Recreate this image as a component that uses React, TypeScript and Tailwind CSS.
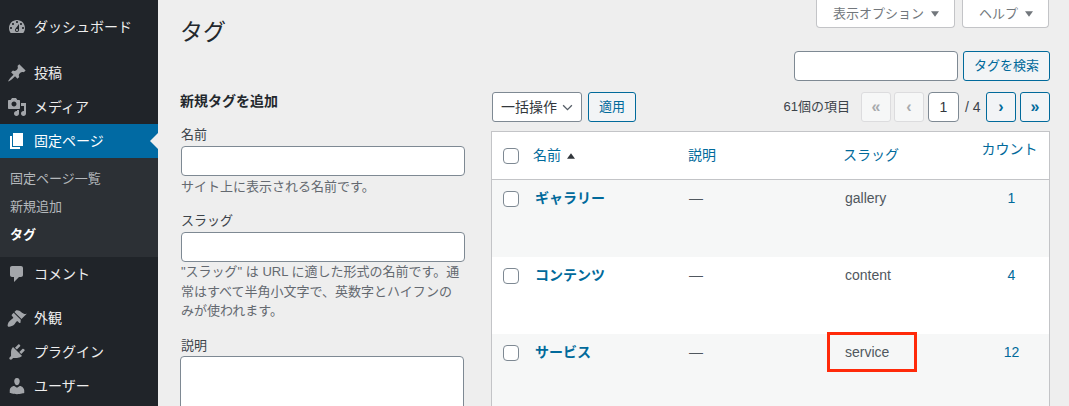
const icons = {
  dashboard: "M3.76 16h12.48c1.1-1.37 1.76-3.11 1.76-5 0-4.42-3.58-8-8-8s-8 3.58-8 8c0 1.89.66 3.63 1.76 5zM10 4c.55 0 1 .45 1 1s-.45 1-1 1-1-.45-1-1 .45-1 1-1zM6 6c.55 0 1 .45 1 1s-.45 1-1 1-1-.45-1-1 .45-1 1-1zm8 0c.55 0 1 .45 1 1s-.45 1-1 1-1-.45-1-1 .45-1 1-1zm-5.37 5.55L12 7v6c0 1.1-.9 2-2 2s-2-.9-2-2c0-.57.24-1.08.63-1.45zM4 10c.55 0 1 .45 1 1s-.45 1-1 1-1-.45-1-1 .45-1 1-1zm12 0c.55 0 1 .45 1 1s-.45 1-1 1-1-.45-1-1 .45-1 1-1zm-5 3c0-.55-.45-1-1-1s-1 .45-1 1 .45 1 1 1 1-.45 1-1z",
  pin: "M10.44 3.02l1.82-1.82 6.36 6.35-1.83 1.82c-1.05-.68-2.48-.57-3.41.36l-.75.75c-.92.93-1.04 2.35-.35 3.41l-1.83 1.82-2.41-2.41-2.8 2.79c-.42.42-3.38 2.71-3.8 2.29s1.86-3.39 2.28-3.81l2.79-2.79L4.1 9.36l1.83-1.82c1.05.69 2.48.57 3.4-.36l.75-.75c.93-.92 1.05-2.35.36-3.41z",
  media: "M13 11V4c0-.55-.45-1-1-1h-1.67L9 1H5L3.67 3H2c-.55 0-1 .45-1 1v7c0 .55.45 1 1 1h10c.55 0 1-.45 1-1zM7 4.5c1.38 0 2.5 1.12 2.5 2.5S8.38 9.5 7 9.5 4.5 8.38 4.5 7 5.62 4.5 7 4.5zM14 6h5v10.5c0 1.38-1.12 2.5-2.5 2.5S14 17.88 14 16.5s1.12-2.5 2.5-2.5c.17 0 .34.02.5.05V9h-3V6zm-4 8.05V13h2v3.5c0 1.38-1.12 2.5-2.5 2.5S7 17.88 7 16.5 8.12 14 9.5 14c.17 0 .34.02.5.05z",
  page: "M6 15V2h10v13H6zm-1 1h8v2H3V5h2v11z",
  comment: "M5 2h9c1.1 0 2 .9 2 2v7c0 1.1-.9 2-2 2h-2l-5 5v-5H5c-1.1 0-2-.9-2-2V4c0-1.1.9-2 2-2z",
  brush: "M14.48 11.06L7.41 3.99l1.5-1.5c.5-.56 2.3-.47 3.51.32 1.21.8 1.43 1.28 2.91 2.1 1.18.64 2.45 1.26 4.45.85zm-.71.71L6.7 4.7 4.93 6.47c-.39.39-.39 1.02 0 1.41l1.06 1.06c.39.39.39 1.03 0 1.42-.6.6-1.43 1.11-2.21 1.69-.35.26-.7.53-1.01.84C1.43 13.71 0 17.5 1.01 18.5c1 1 4.79-.43 6.03-1.67.31-.31.58-.66.84-1.01.58-.78 1.09-1.61 1.69-2.21.39-.39 1.03-.39 1.42 0l1.06 1.06c.39.39 1.02.39 1.41 0z",
  plugin: "M13.11 4.36L9.87 7.6 8 5.73l3.24-3.24c.35-.34 1.05-.2 1.56.32.52.51.66 1.21.31 1.55zm-8 1.77l.91-1.12 9.01 9.01-1.19.84c-.71.71-2.63 1.16-3.82 1.16H6.14L4.9 17.26c-.59.59-1.54.59-2.12 0-.59-.58-.59-1.53 0-2.12l1.24-1.24v-3.88c0-1.13.4-3.19 1.09-3.89zm7.26 3.97l3.24-3.24c.34-.35 1.04-.21 1.55.31.52.51.66 1.21.31 1.55l-3.24 3.25z",
  user: "M10 9.25c-2.27 0-2.73-3.44-2.73-3.44C7 4.02 7.82 2 9.97 2c2.16 0 2.98 2.02 2.71 3.81 0 0-.41 3.44-2.68 3.44zm0 2.57L12.72 10c2.39 0 4.52 2.33 4.52 4.53v2.49s-3.65 1.13-7.24 1.13c-3.65 0-7.24-1.13-7.24-1.13v-2.49c0-2.25 1.94-4.48 4.47-4.48z",
};

const MenuIcon = ({ d, white }: { d: string; white?: boolean }) => (
  <svg viewBox="0 0 20 20" className={`w-5 h-5 shrink-0 ${white ? 'fill-white' : 'fill-[#a3a6aa]'}`}>
    <path d={d} fillRule="evenodd" />
  </svg>
);

const MenuItem = ({ icon, label, className = '' }: { icon: string; label: string; className?: string }) => (
  <div className={`flex items-center h-[34px] pl-[7px] gap-[7px] text-[14px] text-[#eeeeee] ${className}`}>
    <MenuIcon d={icon} />
    <span>{label}</span>
  </div>
);

const Sidebar = () => (
  <aside className="w-[158px] shrink-0 h-[406px] bg-[#202429] pt-[10px] overflow-hidden">
    <MenuItem icon={icons.dashboard} label="ダッシュボード" className="mb-[12px]" />
    <MenuItem icon={icons.pin} label="投稿" />
    <MenuItem icon={icons.media} label="メディア" />
    <div className="relative flex items-center h-[34px] pl-[7px] gap-[7px] text-[14px] text-white bg-[#016aa3]">
      <MenuIcon d={icons.page} white />
      <span>固定ページ</span>
      <div className="absolute right-0 top-[9px] w-0 h-0 border-y-[8px] border-y-transparent border-r-[8px] border-r-[#eeeeee]" />
    </div>
    <div className="h-[99px] bg-[#2c3035] pt-[7px] pl-[10px] text-[13px] text-[#b4b8bc]">
      <div className="h-[28px] leading-[28px]">固定ページ一覧</div>
      <div className="h-[28px] leading-[28px]">新規追加</div>
      <div className="h-[27px] leading-[27px] font-bold text-white">タグ</div>
    </div>
    <MenuItem icon={icons.comment} label="コメント" className="mb-[10px]" />
    <MenuItem icon={icons.brush} label="外観" />
    <MenuItem icon={icons.plugin} label="プラグイン" />
    <MenuItem icon={icons.user} label="ユーザー" />
  </aside>
);

const Caret = () => (
  <svg viewBox="0 0 10 7" className="w-[8px] h-[6px] fill-[#72777c] ml-[7px]">
    <path d="M0 0h10L5 7z" />
  </svg>
);

const fieldClass = 'block bg-white border border-[#7e8993] rounded-[4px] h-[30px]';

const AddForm = () => (
  <div className="w-[284px] shrink-0">
    <h1 className="mt-[18px] -ml-px text-[23px] leading-[29px] text-[#23282d]">タグ</h1>
    <h2 className="mt-[44px] text-[14px] leading-[20px] font-bold text-[#23282d] -ml-px">新規タグを追加</h2>
    <label className="block mt-[14px] text-[13px] leading-[20px] text-[#3c434a]">名前</label>
    <div className={`${fieldClass} w-full mt-px`} />
    <p className="mt-px text-[13px] leading-[20px] text-[#646970]">サイト上に表示される名前です。</p>
    <label className="block mt-[14px] text-[13px] leading-[20px] text-[#3c434a]">スラッグ</label>
    <div className={`${fieldClass} w-full mt-px`} />
    <p className="text-[13px] leading-[19.5px] text-[#646970]">
      "スラッグ" は URL に適した形式の名前です。通常はすべて半角小文字で、英数字とハイフンのみが使われます。
    </p>
    <label className="block mt-[15px] text-[13px] leading-[20px] text-[#3c434a]">説明</label>
    <div className="w-full bg-white border border-[#7e8993] rounded-[4px] h-[120px] -ml-px" />
  </div>
);

const blueButton = 'flex items-center justify-center h-[30px] border border-[#016a9b] rounded-[3px] bg-[#f2f4f6] text-[#016a9b] text-[13px]';
const disabledButton = 'flex items-center justify-center w-[30px] h-[30px] border border-[#dcdcde] rounded-[3px] bg-[#f6f7f7] text-[#a7aaad] text-[16px] font-bold';

const Toolbar = () => (
  <div className="flex items-center mt-[11px] pl-px text-[13px]">
    <div className="flex items-center w-[90px] h-[30px] bg-white border border-[#7e8993] rounded-[3px] pl-[8px] text-[14px] text-[#32373c]">
      一括操作
      <svg viewBox="0 0 12 8" className="w-[11px] h-[7px] ml-[5px] stroke-[#555d66] fill-none" strokeWidth="1.5">
        <path d="M1 1.5l5 5 5-5" />
      </svg>
    </div>
    <div className={`${blueButton} w-[48px] ml-[6px]`}>適用</div>
    <span className="ml-auto mr-[11px] text-[#3c434a]">61個の項目</span>
    <div className={disabledButton}>«</div>
    <div className={`${disabledButton} ml-[3px]`}>‹</div>
    <div className="flex items-center justify-center w-[31px] h-[30px] ml-[4px] bg-white border border-[#7e8993] rounded-[4px] text-[14px] text-[#32373c]">1</div>
    <span className="ml-[6px] w-[21px] text-[14px] text-[#3c434a]">/ 4</span>
    <div className={`${blueButton} w-[30px] font-bold text-[16px]`}>›</div>
    <div className={`${blueButton} w-[30px] ml-[4px] font-bold text-[16px]`}>»</div>
  </div>
);

const Checkbox = () => (
  <div className="w-4 h-4 bg-white border border-[#7e8993] rounded-[4px] ml-[11px]" />
);

const rows = [
  { name: 'ギャラリー', slug: 'gallery', count: '1', bg: 'bg-[#f6f7f7]' },
  { name: 'コンテンツ', slug: 'content', count: '4', bg: 'bg-white' },
  { name: 'サービス', slug: 'service', count: '12', bg: 'bg-[#f6f7f7]' },
];

const TagTable = () => (
  <div className="relative mt-[9px] bg-white border border-[#c3c4c7] h-[400px] overflow-hidden">
    <table className="w-full table-fixed text-[14px] border-separate border-spacing-0">
      <colgroup>
        <col className="w-[33px]" />
        <col className="w-[155px]" />
        <col className="w-[156px]" />
        <col className="w-[139px]" />
        <col />
      </colgroup>
      <thead>
        <tr className="h-[48px] text-[#016a9b]">
          <th className="p-0 align-middle border-b border-[#c3c4c7]"><div className="pt-[1px]"><Checkbox /></div></th>
          <th className="p-0 pl-[8px] font-normal text-left border-b border-[#c3c4c7]">
            <span className="inline-flex items-center">
              名前
              <svg viewBox="0 0 10 7" className="w-[8px] h-[6px] ml-[6px] fill-[#32373c]"><path d="M5 0l5 7H0z" /></svg>
            </span>
          </th>
          <th className="p-0 pl-[8px] font-normal text-left border-b border-[#c3c4c7]">説明</th>
          <th className="p-0 pl-[7px] font-normal text-left border-b border-[#c3c4c7]">スラッグ</th>
          <th className="p-0 pb-[12px] pr-[5px] font-normal text-center border-b border-[#c3c4c7]">カウント</th>
        </tr>
      </thead>
      <tbody>
        {rows.map((row) => (
          <tr key={row.slug} className={`h-[77px] align-top ${row.bg}`}>
            <td className="p-0 pt-[11px]"><Checkbox /></td>
            <td className="p-0 pl-[10px] pt-[8px] leading-[20px] font-bold text-[#016a9b]">{row.name}</td>
            <td className="p-0 pl-[9px] pt-[8px] leading-[20px] text-[#50575e]">—</td>
            <td className="p-0 pl-[9px] pt-[8px] leading-[20px] text-[#50575e]">{row.slug}</td>
            <td className="p-0 pt-[8px] leading-[20px] text-center text-[#016a9b] pr-[1px]">{row.count}</td>
          </tr>
        ))}
      </tbody>
    </table>
    <div className="absolute left-[335px] top-[200px] w-[90px] h-[40px] border-[3px] border-[#ff2a0a]" />
  </div>
);

const TagList = () => (
  <div className="w-[559px] ml-[26px]">
    <div className="flex justify-end gap-[7px] pr-px">
      <div className="flex items-center w-[139px] h-[28px] pl-[16px] bg-white border border-t-0 border-[#c3c4c7] rounded-b-[4px] text-[13px] text-[#72777c]">
        表示オプション<Caret />
      </div>
      <div className="flex items-center w-[87px] h-[28px] pl-[16px] bg-white border border-t-0 border-[#c3c4c7] rounded-b-[4px] text-[13px] text-[#72777c]">
        ヘルプ<Caret />
      </div>
    </div>
    <div className="flex justify-end mt-[23px] gap-[5px]">
      <div className={`${fieldClass} w-[164px]`} />
      <div className={`${blueButton} w-[87px]`}>タグを検索</div>
    </div>
    <Toolbar />
    <TagTable />
  </div>
);

export default function App() {
  return (
    <div className="flex w-[1069px] h-[406px] overflow-hidden bg-[#eeeeee] font-['Liberation_Sans','Noto_Sans_CJK_JP',sans-serif]">
      <Sidebar />
      <main className="flex pl-[23px]">
        <AddForm />
        <TagList />
      </main>
    </div>
  );
}
